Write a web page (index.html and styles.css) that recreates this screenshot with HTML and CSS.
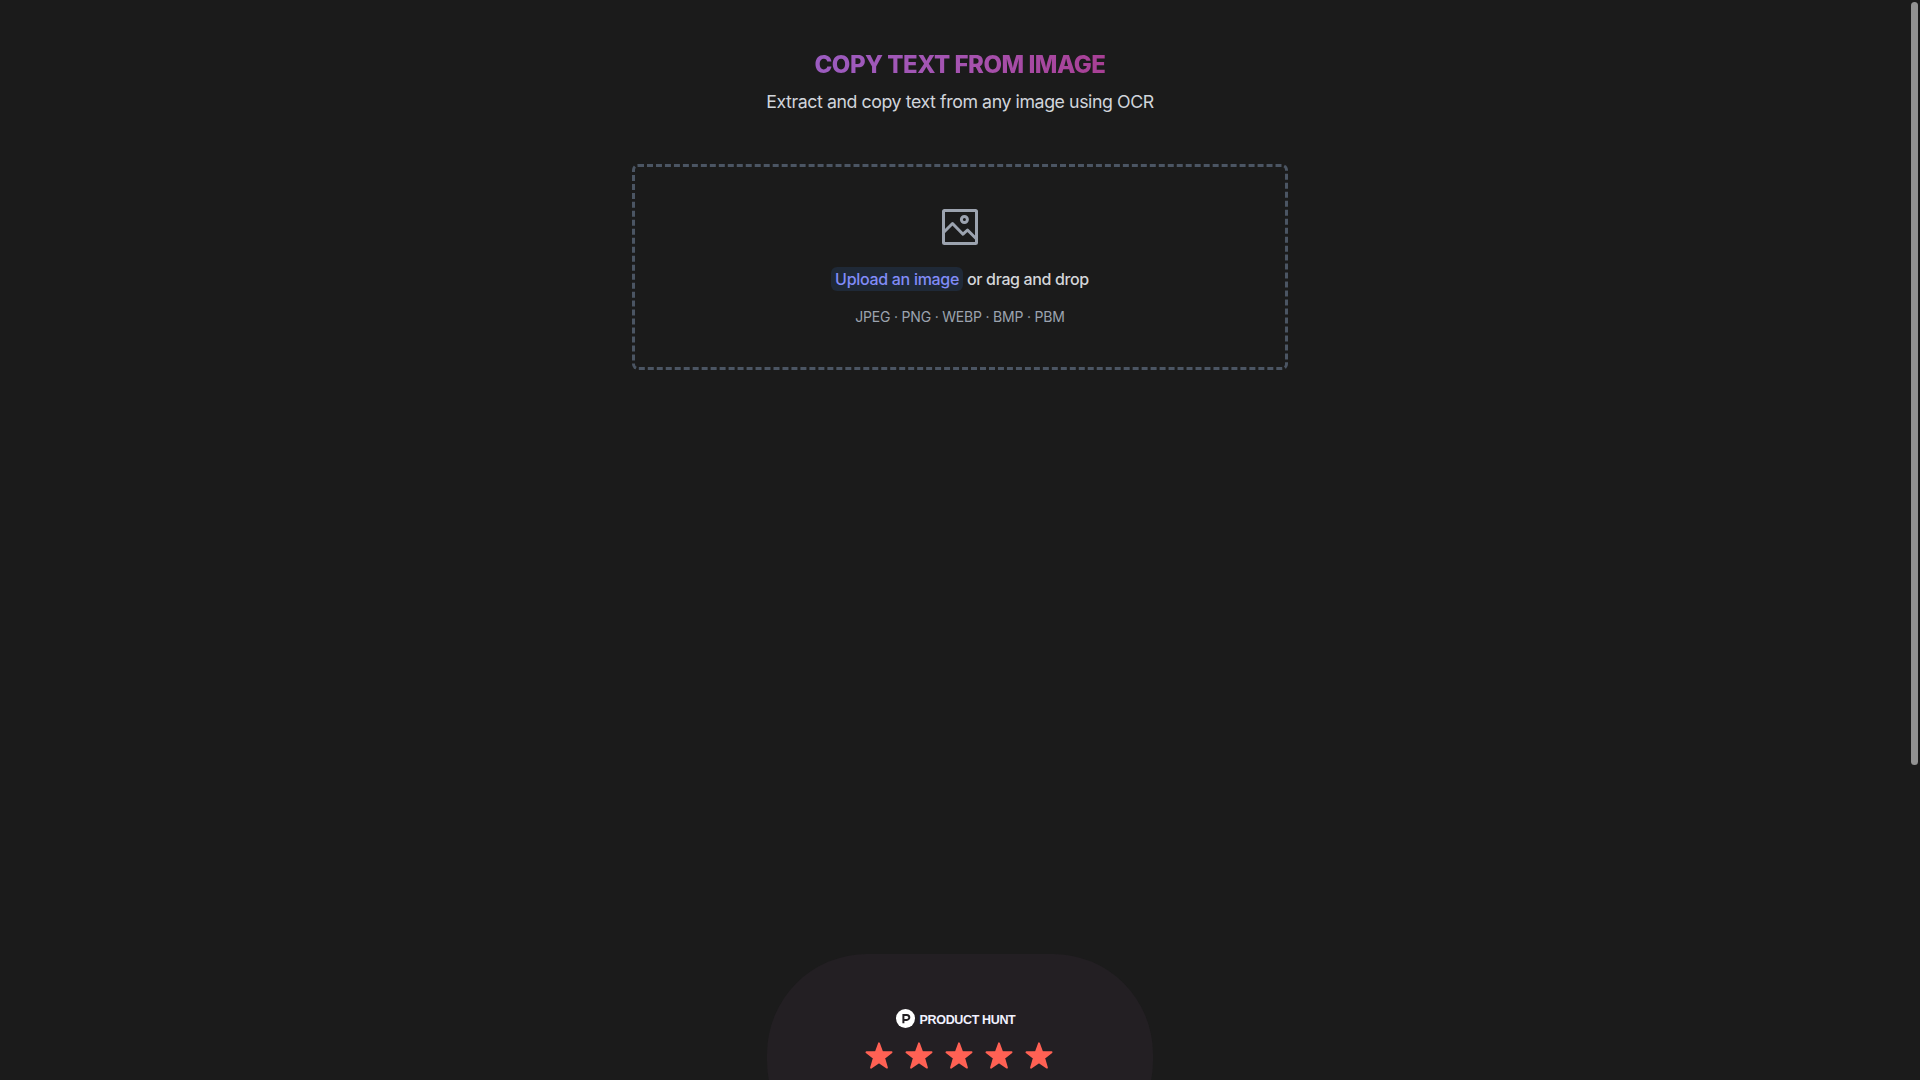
FILE: index.html
```html
<!DOCTYPE html>
<html lang="en">
<head>
<meta charset="utf-8">
<title>Copy text from image</title>
<link rel="stylesheet" href="styles.css">
</head>
<body>
<main class="page">
  <header class="intro">
    <h1 class="title"><span class="title-text">COPY TEXT FROM IMAGE</span></h1>
    <p class="subtitle">Extract and copy text from any image using OCR</p>
  </header>
  <section class="dropzone">
    <svg class="photo" viewBox="0 0 48 48" fill="none" stroke="currentColor" stroke-width="3" stroke-linecap="round" stroke-linejoin="round">
      <rect x="7.5" y="7.5" width="33" height="33" rx="1"/>
      <path d="M7.5 29.5 16.5 20.5 27 31.200 31.500 27 40.500 36"/>
      <circle cx="28.400" cy="16.500" r="3"/>
    </svg>
    <p class="prompt"><span class="upload">Upload an image</span><span class="drag">or drag and drop</span></p>
    <p class="formats">JPEG · PNG · WEBP · BMP · PBM</p>
  </section>
  <section class="review">
    <div class="brand">
      <svg class="brand-mark" viewBox="0 0 19 19">
        <circle cx="9.500" cy="9.500" r="9.500" fill="#fff"/>
        <path d="M7.400 14.200V5.900h3.400a2.500 2.500 0 0 1 0 5H7.400" fill="none" stroke="#231f23" stroke-width="2"/>
      </svg>
      <span class="brand-name">PRODUCT HUNT</span>
    </div>
    <div class="stars">
      <svg class="star" viewBox="0 0 28 27"><path d="M14 1.300 17.100 9.800 26.600 10.200 19.200 16.100 22 25.700 14 20.200 6 25.700 8.800 16.100 1.400 10.200 10.900 9.800Z"/></svg>
      <svg class="star" viewBox="0 0 28 27"><path d="M14 1.300 17.100 9.800 26.600 10.200 19.200 16.100 22 25.700 14 20.200 6 25.700 8.800 16.100 1.400 10.200 10.900 9.800Z"/></svg>
      <svg class="star" viewBox="0 0 28 27"><path d="M14 1.300 17.100 9.800 26.600 10.200 19.200 16.100 22 25.700 14 20.200 6 25.700 8.800 16.100 1.400 10.200 10.900 9.800Z"/></svg>
      <svg class="star" viewBox="0 0 28 27"><path d="M14 1.300 17.100 9.800 26.600 10.200 19.200 16.100 22 25.700 14 20.200 6 25.700 8.800 16.100 1.400 10.200 10.900 9.800Z"/></svg>
      <svg class="star" viewBox="0 0 28 27"><path d="M14 1.300 17.100 9.800 26.600 10.200 19.200 16.100 22 25.700 14 20.200 6 25.700 8.800 16.100 1.400 10.200 10.900 9.800Z"/></svg>
    </div>
  </section>
</main>
<div class="scroll-thumb"></div>
</body>
</html>
```
FILE: styles.css
```css
* { box-sizing: border-box; }
body {
  margin: 0;
  height: 100vh;
  overflow: hidden;
  background: #1b1b1b;
  font-family: Inter, "Liberation Sans", sans-serif;
}
h1, p { margin: 0; }
.page {
  height: 1080px;
  display: flex;
  flex-direction: column;
  align-items: center;
  padding-top: 49px;
  overflow: hidden;
}
.intro {
  display: flex;
  flex-direction: column;
  align-items: center;
}
.title {
  font-size: 24px;
  line-height: 32px;
  font-weight: 800;
  letter-spacing: -0.5px;
  white-space: nowrap;
}
.title-text {
  display: block;
  background: linear-gradient(100deg, #9b5cc0 0%, #a553b0 50%, #a83f94 100%);
  -webkit-background-clip: text;
  background-clip: text;
  color: transparent;
}
.subtitle {
  margin-top: 7px;
  font-size: 17.75px;
  line-height: 28px;
  letter-spacing: -0.42px;
  color: #d1d5db;
}
.dropzone {
  flex: none;
  width: 656px;
  height: 206px;
  margin-top: 48px;
  padding-top: 36px;
  border: 3px dashed #4b5563;
  border-radius: 6px;
  display: flex;
  flex-direction: column;
  align-items: center;
}
.photo {
  width: 48px;
  height: 48px;
  color: #9ca3af;
}
.prompt {
  margin-top: 16px;
  display: flex;
  gap: 4px;
  font-size: 16px;
  line-height: 24px;
  font-weight: 500;
  letter-spacing: -0.3px;
  color: #d4d6d9;
}
.upload {
  padding: 0 4px;
  border-radius: 6px;
  background: #1f2937;
  color: #818cf8;
}
.drag { letter-spacing: -0.36px; }
.formats {
  margin-top: 16px;
  font-size: 14px;
  line-height: 20px;
  letter-spacing: -0.2px;
  color: #9ca3af;
}
.review {
  flex: none;
  width: 386px;
  height: 207px;
  margin-top: 584px;
  padding-top: 55px;
  border-radius: 100px;
  background: #231f23;
  display: flex;
  flex-direction: column;
  align-items: center;
}
.brand {
  height: 20px;
  display: flex;
  align-items: flex-start;
  gap: 5px;
  margin-right: 9px;
}
.brand-mark { width: 19px; height: 19px; }
.brand-name {
  padding-top: 1px;
  font: bold 12.5px/20px "Liberation Sans", sans-serif;
  letter-spacing: -0.35px;
  color: #f1f1ff;
}
.stars {
  display: flex;
  gap: 12px;
  margin-top: 13px;
  margin-right: 3px;
}
.star {
  width: 28px;
  height: 27px;
  fill: #ff6154;
  stroke: #ff6154;
  stroke-width: 1.8px;
  stroke-linejoin: round;
}
.scroll-thumb {
  position: fixed;
  top: 2px;
  right: 2px;
  width: 7px;
  height: 763px;
  border-radius: 4px;
  background: #929292;
}
```
